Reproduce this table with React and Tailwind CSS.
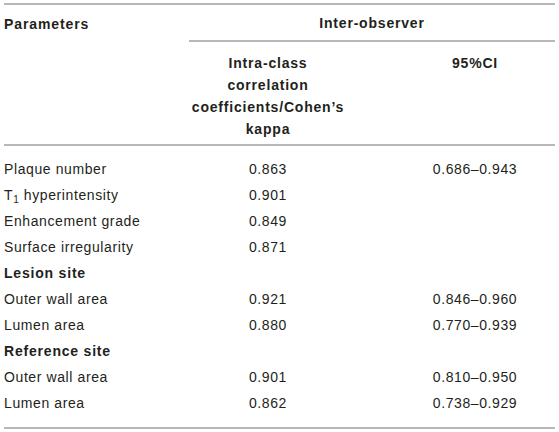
import React from "react";

const rows = [
  { label: "Plaque number", icc: "0.863", ci: "0.686–0.943" },
  { label: "T1", icc: "0.901", ci: "" },
  { label: "Enhancement grade", icc: "0.849", ci: "" },
  { label: "Surface irregularity", icc: "0.871", ci: "" },
  { label: "Lesion site", section: true },
  { label: "Outer wall area", icc: "0.921", ci: "0.846–0.960" },
  { label: "Lumen area", icc: "0.880", ci: "0.770–0.939" },
  { label: "Reference site", section: true },
  { label: "Outer wall area", icc: "0.901", ci: "0.810–0.950" },
  { label: "Lumen area", icc: "0.862", ci: "0.738–0.929" },
];

export default function App() {
  return (
    <div className="w-[559px] h-[432px] bg-white text-[#231f20] text-[14px] pt-[3px] pl-[4px]" style={{ fontFamily: '"Liberation Sans", Arial, sans-serif' }}>
      <div className="w-[551px]">
        <div className="h-[2px] bg-[#b8b8b8]" />
        <div className="grid grid-cols-[185px_158px_208px]">
          <div className="row-span-3 pt-[8px] font-bold tracking-[0.9px] leading-[22px]">Parameters</div>
          <div className="col-span-2 h-[35px] pt-[2px] flex items-center justify-center font-bold tracking-[0.8px]">
            Inter-observer
          </div>
          <div className="col-span-2 h-[2px] bg-[#b8b8b8]" />
          <div className="pt-[10px] pb-[4px] text-center font-bold tracking-[0.8px] leading-[22px]">
            Intra-class
            <br />
            correlation
            <br />
            coefficients/Cohen’s
            <br />
            kappa
          </div>
          <div className="pt-[10px] pl-[48px] text-center font-bold tracking-[0.8px] leading-[22px]">95%CI</div>
        </div>
        <div className="h-[2px] bg-[#b8b8b8]" />
        <div className="pt-[10px] pb-[11px]">
          {rows.map((r, i) => (
            <div key={i} className="grid grid-cols-[185px_158px_208px] h-[26px] items-center tracking-[0.6px]">
              {r.section ? (
                <div className="font-bold tracking-[0.8px]">{r.label}</div>
              ) : (
                <div>
                  {r.label === "T1" ? (
                    <span>
                      T<sub className="text-[10px] align-baseline relative top-[3px]">1</sub> hyperintensity
                    </span>
                  ) : (
                    r.label
                  )}
                </div>
              )}
              <div className="text-center">{r.icc}</div>
              <div className="text-center pl-[48px]">{r.ci}</div>
            </div>
          ))}
        </div>
        <div className="h-[2px] bg-[#b8b8b8]" />
      </div>
    </div>
  );
}
